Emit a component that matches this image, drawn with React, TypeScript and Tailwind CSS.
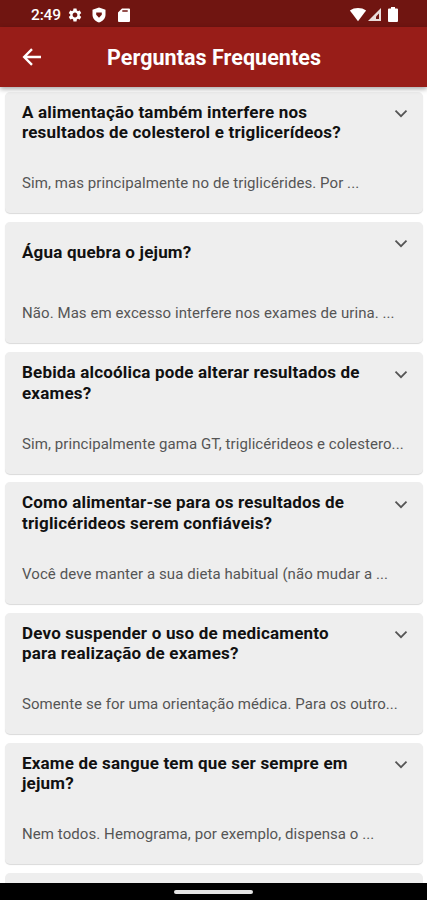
import { MdSettings } from 'react-icons/md';

const faqs = [
  {
    question: ['A alimentação também interfere nos', 'resultados de colesterol e triglicerídeos?'],
    answer: 'Sim, mas principalmente no de triglicérides. Por ...',
  },
  {
    question: ['Água quebra o jejum?'],
    answer: 'Não. Mas em excesso interfere nos exames de urina. ...',
  },
  {
    question: ['Bebida alcoólica pode alterar resultados de', 'exames?'],
    answer: 'Sim, principalmente gama GT, triglicérideos e colestero...',
  },
  {
    question: ['Como alimentar-se para os resultados de', 'triglicérideos serem confiáveis?'],
    answer: 'Você deve manter a sua dieta habitual (não mudar a ...',
  },
  {
    question: ['Devo suspender o uso de medicamento', 'para realização de exames?'],
    answer: 'Somente se for uma orientação médica. Para os outro...',
  },
  {
    question: ['Exame de sangue tem que ser sempre em', 'jejum?'],
    answer: 'Nem todos. Hemograma, por exemplo, dispensa o ...',
  },
];

function StatusBar() {
  return (
    <div className="flex h-[26.5px] shrink-0 items-center bg-[#701511] pl-[31px] pr-[29px] pt-[3px] text-white">
      <span className="mt-px w-[36px] text-[15.5px] font-medium leading-none tracking-[-0.01em]">2:49</span>
      <MdSettings className="size-[16px]" />
      <svg viewBox="0 0 14 16" className="ml-[9px] h-[16px] w-[14px]" fill="currentColor">
        <path
          fillRule="evenodd"
          d="M7 .5.5 2.8v5c0 3.7 2.7 6.5 6.5 7.7 3.8-1.2 6.5-4 6.5-7.7v-5L7 .5ZM4.2 5.500h5.600v2.300L7 10.800 4.200 7.800Z"
        />
      </svg>
      <svg viewBox="0 0 12 14" className="ml-[12px] h-[14px] w-[12px]" fill="currentColor">
        <path
          fillRule="evenodd"
          d="M4 .5h7a1 1 0 0 1 1 1V13a1 1 0 0 1-1 1H1a1 1 0 0 1-1-1V4.5l4-4Zm.3 1.800v1.400h5.400V2.300Z"
        />
      </svg>
      <svg viewBox="0 0 18 15" className="ml-auto h-[15px] w-[18px]" fill="currentColor">
        <path d="M.9 3.5C5.4.2 12.6.2 17.1 3.5L9 14.3.9 3.5Z" />
      </svg>
      <svg viewBox="0 0 15 15" className="h-[15px] w-[15px]" fill="none">
        <path d="M14 1v13H1L14 1Z" fill="#fff" fillOpacity=".85" />
        <path d="M12 6.5V12H9V9.500L12 6.500Z" fill="#701511" />
      </svg>
      <svg viewBox="0 0 10 15" className="ml-[6px] h-[15px] w-[10px]" fill="currentColor">
        <path d="M3 0h4v1.500h2a1 1 0 0 1 1 1V14a1 1 0 0 1-1 1H1a1 1 0 0 1-1-1V2.500a1 1 0 0 1 1-1h2Z" />
      </svg>
    </div>
  );
}

function FaqCard({ question, answer }: { question: string[]; answer: string }) {
  return (
    <article className="flex h-[121.5px] shrink-0 flex-col rounded-[5px] bg-[#eeeeee] pl-[17.5px] shadow-[0_1px_1px_rgba(0,0,0,0.15)]">
      <div className="flex h-[61px] items-center">
        <h2 className="flex-1 text-[17px] font-bold leading-[20.5px] tracking-[0.011em] text-[#111]">
          {question.map((line) => (
            <span key={line} className="block whitespace-nowrap">
              {line}
            </span>
          ))}
        </h2>
        <svg
          viewBox="0 0 14 9"
          className="mr-[15px] mt-[17.5px] h-[9px] w-[14px] self-start"
          fill="none"
          stroke="#555"
          strokeWidth="1.8"
        >
          <path d="m1.5 1.7 5.5 5.5 5.5-5.5" />
        </svg>
      </div>
      <p className="mt-[20.5px] whitespace-nowrap text-[15px] leading-[20px] tracking-[0.005em] text-[#555]">{answer}</p>
    </article>
  );
}

export default function App() {
  return (
    <div className="flex h-[900px] w-[427px] flex-col overflow-hidden bg-white font-['Roboto',sans-serif]">
      <StatusBar />
      <header className="z-10 flex h-[60px] shrink-0 items-center bg-[#981d18] text-white shadow-[0_2px_5px_rgba(0,0,0,0.35)]">
        <svg
          viewBox="0 0 20 18"
          className="ml-[21.5px] mt-[1px] h-[18px] w-[20px]"
          fill="none"
          stroke="currentColor"
          strokeWidth="2.4"
        >
          <path d="M19 9H2.500M10 1.200 2.200 9l7.800 7.800" />
        </svg>
        <h1 className="ml-[65.5px] mt-[3px] whitespace-nowrap text-[21.5px] font-bold leading-none tracking-[0.002em]">
          Perguntas Frequentes
        </h1>
      </header>
      <main className="flex min-h-0 flex-1 flex-col gap-[8.7px] overflow-hidden pl-[4.5px] pr-[4px] pt-[5.3px]">
        {faqs.map((faq) => (
          <FaqCard key={faq.answer} {...faq} />
        ))}
        <div className="h-[121.5px] shrink-0 rounded-[5px] bg-[#eeeeee]" />
      </main>
      <footer className="flex h-[17px] shrink-0 items-center justify-center bg-black">
        <div className="mt-[1px] h-[4px] w-[79px] rounded-full bg-[#e5e5e5]" />
      </footer>
    </div>
  );
}
